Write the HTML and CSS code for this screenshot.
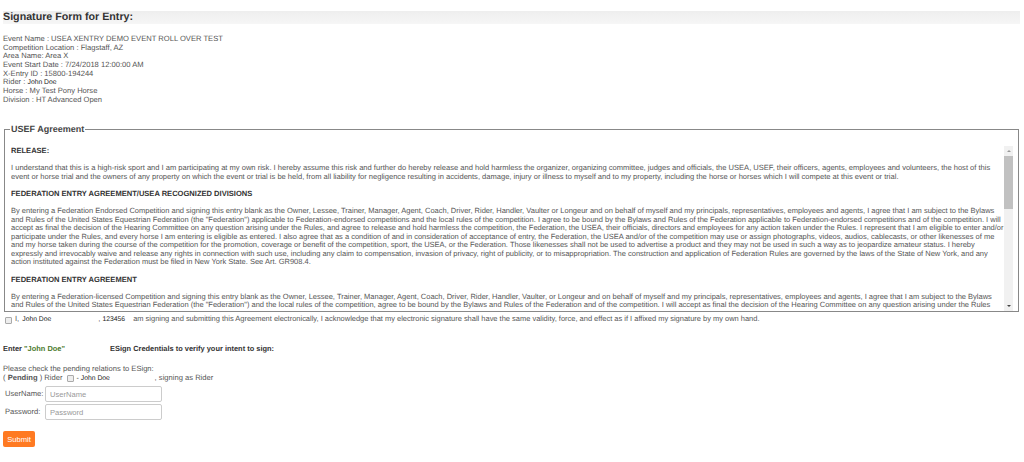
FILE: index.html
```html
<!DOCTYPE html>
<html lang="en">
<head>
    <meta charset="UTF-8">
    <meta name="viewport" content="width=device-width, initial-scale=1.0">
    <title>Signature Form for Entry</title>
    <link rel="stylesheet" href="styles.css">
</head>
<body>

    <h2 class="page-title">Signature Form for Entry:</h2>

    <div class="entry-info">
        <div>Event Name : USEA XENTRY DEMO EVENT ROLL OVER TEST</div>
        <div>Competition Location : Flagstaff, AZ</div>
        <div>Area Name: Area X</div>
        <div>Event Start Date : 7/24/2018 12:00:00 AM</div>
        <div>X-Entry ID : 15800-194244</div>
        <div>Rider : <span class="name">John Doe</span></div>
        <div>Horse : My Test Pony Horse</div>
        <div>Division : HT Advanced Open</div>
    </div>

    <fieldset class="agreement">
        <legend>USEF Agreement</legend>
        <div class="agreement-body">
            <div class="agreement-text">
                <p class="head">RELEASE:</p>
                <p class="release-text">I understand that this is a high-risk sport and I am participating at my own risk. I hereby assume this risk and further do hereby release and hold harmless the organizer, organizing committee, judges and officials, the USEA, USEF, their officers, agents, employees and volunteers, the host of this<br>
                event or horse trial and the owners of any property on which the event or trial is be held, from all liability for negligence resulting in accidents, damage, injury or illness to myself and to my property, including the horse or horses which I will compete at this event or trial.</p>
                <p class="head">FEDERATION ENTRY AGREEMENT/USEA RECOGNIZED DIVISIONS</p>
                <p>By entering a Federation Endorsed Competition and signing this entry blank as the Owner, Lessee, Trainer, Manager, Agent, Coach, Driver, Rider, Handler, Vaulter or Longeur and on behalf of myself and my principals, representatives, employees and agents, I agree that I am subject to the Bylaws<br>
                and Rules of the United States Equestrian Federation (the "Federation") applicable to Federation-endorsed competitions and the local rules of the competition. I agree to be bound by the Bylaws and Rules of the Federation applicable to Federation-endorsed competitions and of the competition. I will<br>
                accept as final the decision of the Hearing Committee on any question arising under the Rules, and agree to release and hold harmless the competition, the Federation, the USEA, their officials, directors and employees for any action taken under the Rules. I represent that I am eligible to enter and/or<br>
                participate under the Rules, and every horse I am entering is eligible as entered. I also agree that as a condition of and in consideration of acceptance of entry, the Federation, the USEA and/or of the competition may use or assign photographs, videos, audios, cablecasts, or other likenesses of me<br>
                and my horse taken during the course of the competition for the promotion, coverage or benefit of the competition, sport, the USEA, or the Federation. Those likenesses shall not be used to advertise a product and they may not be used in such a way as to jeopardize amateur status. I hereby<br>
                expressly and irrevocably waive and release any rights in connection with such use, including any claim to compensation, invasion of privacy, right of publicity, or to misappropriation. The construction and application of Federation Rules are governed by the laws of the State of New York, and any<br>
                action instituted against the Federation must be filed in New York State. See Art. GR908.4.</p>
                <p class="head">FEDERATION ENTRY AGREEMENT</p>
                <p>By entering a Federation-licensed Competition and signing this entry blank as the Owner, Lessee, Trainer, Manager, Agent, Coach, Driver, Rider, Handler, Vaulter, or Longeur and on behalf of myself and my principals, representatives, employees and agents, I agree that I am subject to the Bylaws<br>
                and Rules of the United States Equestrian Federation (the "Federation") and the local rules of the competition, agree to be bound by the Bylaws and Rules of the Federation and of the competition. I will accept as final the decision of the Hearing Committee on any question arising under the Rules</p>
            </div>
            <div class="scrollbar">
                <span class="arrow up"></span>
                <div class="track"><div class="thumb"></div></div>
                <span class="arrow down"></span>
            </div>
        </div>
    </fieldset>

    <div class="sign-line">
        <input type="checkbox" class="check">
        <span>I,</span>
        <span class="name sign-name">John Doe</span>
        <span>, <span class="name">123456</span></span>
        <span class="sign-text">am signing and submitting this Agreement electronically, I acknowledge that my electronic signature shall have the same validity, force, and effect as if I affixed my signature by my own hand.</span>
    </div>

    <div class="enter-line">
        <b class="enter-name">Enter <span class="green">"John Doe"</span></b>
        <b>ESign Credentials to verify your intent to sign:</b>
    </div>

    <div class="relations">
        <div>Please check the pending relations to ESign:</div>
        <div class="relation-row">( <b>Pending</b> ) Rider <input type="checkbox" class="check"> <span class="name rel-name">- John Doe</span><span>, signing as Rider</span></div>
    </div>

    <div class="login-row">
        <label>UserName:</label>
        <input type="text" placeholder="UserName">
    </div>
    <div class="login-row">
        <label>Password:</label>
        <input type="text" placeholder="Password">
    </div>

    <button class="submit-btn">Submit</button>

</body>
</html>
```

FILE: styles.css
```css
body {
    font-family: "Liberation Sans", Arial, sans-serif;
    font-size: 7.6px;
    line-height: 8.62px;
    color: #555;
    background-color: #fff;
    margin: 0;
    padding: 11px 4px 0 3px;
    text-rendering: geometricPrecision;
}
.page-title {
    margin: 0;
    height: 13px;
    font-size: 10.7px;
    line-height: 13px;
    color: #333;
    background: linear-gradient(to bottom, #eeeeee, #f6f6f6);
}
.entry-info {
    margin-top: 11px;
}
.name {
    color: #222;
    font-size: 6.8px;
    line-height: 1;
}
.agreement {
    margin: 20px 1px 0 1px;
    padding: 0 5px 0 6px;
    height: 188px;
    min-width: 0;
    box-sizing: border-box;
    border: 1px solid #888;
}
.agreement legend {
    padding: 0 1px;
    margin-left: -1px;
    font-size: 9px;
    font-weight: bold;
    line-height: 11px;
    color: #444;
}
.agreement-body {
    display: flex;
    height: 165px;
    margin-top: 11px;
}
.agreement-text {
    flex: 1;
    min-width: 0;
    overflow: hidden;
    padding: 1px 1px 0 0;
    font-size: 7.5px;
    line-height: 8.56px;
    white-space: nowrap;
}
.agreement-text p {
    margin: 0 0 8.56px 0;
}
.agreement-text p.head {
    font-size: 7.55px;
    font-weight: bold;
    color: #333;
}
.agreement-text p.release-text {
    font-size: 7.55px;
}
.scrollbar {
    width: 9px;
    flex: none;
    display: flex;
    flex-direction: column;
    align-items: center;
    background: #f1f1f1;
}
.track {
    flex: 1;
    width: 100%;
}
.thumb {
    height: 53px;
    background: #c1c1c1;
}
.arrow {
    display: block;
    flex: none;
    margin: 4px 0;
    border-left: 2px solid transparent;
    border-right: 2px solid transparent;
}
.arrow.up {
    border-bottom: 2px solid #999;
}
.arrow.down {
    border-top: 2px solid #444;
}
.sign-line {
    display: flex;
    align-items: baseline;
    margin-top: 3px;
    height: 10px;
}
.check {
    appearance: none;
    align-self: center;
    width: 7px;
    height: 7px;
    margin: 0 3px 0 2px;
    background: #eee;
    border: 1px solid #aaa;
    border-radius: 1px;
    box-sizing: border-box;
}
.sign-name {
    width: 76px;
    margin-left: 3px;
}
.sign-text {
    margin-left: 8px;
    font-size: 7.47px;
}
.enter-line {
    display: flex;
    margin-top: 20px;
    font-size: 7.45px;
    color: #333;
}
.enter-name {
    width: 107px;
}
.green {
    color: #4c7a2e;
}
.relations {
    margin-top: 11px;
}
.relation-row {
    margin-top: 1px;
    display: flex;
    align-items: baseline;
    white-space: pre;
}
.rel-name {
    width: 78px;
}
.login-row {
    display: flex;
    align-items: center;
    margin-top: 2px;
    padding-left: 2px;
}
.relations + .login-row {
    margin-top: 3px;
}
.login-row label {
    width: 40px;
}
.login-row input {
    width: 117px;
    height: 16px;
    box-sizing: border-box;
    padding: 0 4px;
    font-family: inherit;
    font-size: 7.6px;
    border: 1px solid #ccc;
    border-radius: 2px;
}
.login-row input::placeholder {
    color: #999;
}
.submit-btn {
    display: block;
    margin-top: 11px;
    width: 32px;
    height: 16px;
    padding: 0;
    font-family: inherit;
    font-size: 7.6px;
    color: #fff;
    background-color: #ff7a22;
    border: none;
    border-radius: 2px;
    cursor: pointer;
}
```
